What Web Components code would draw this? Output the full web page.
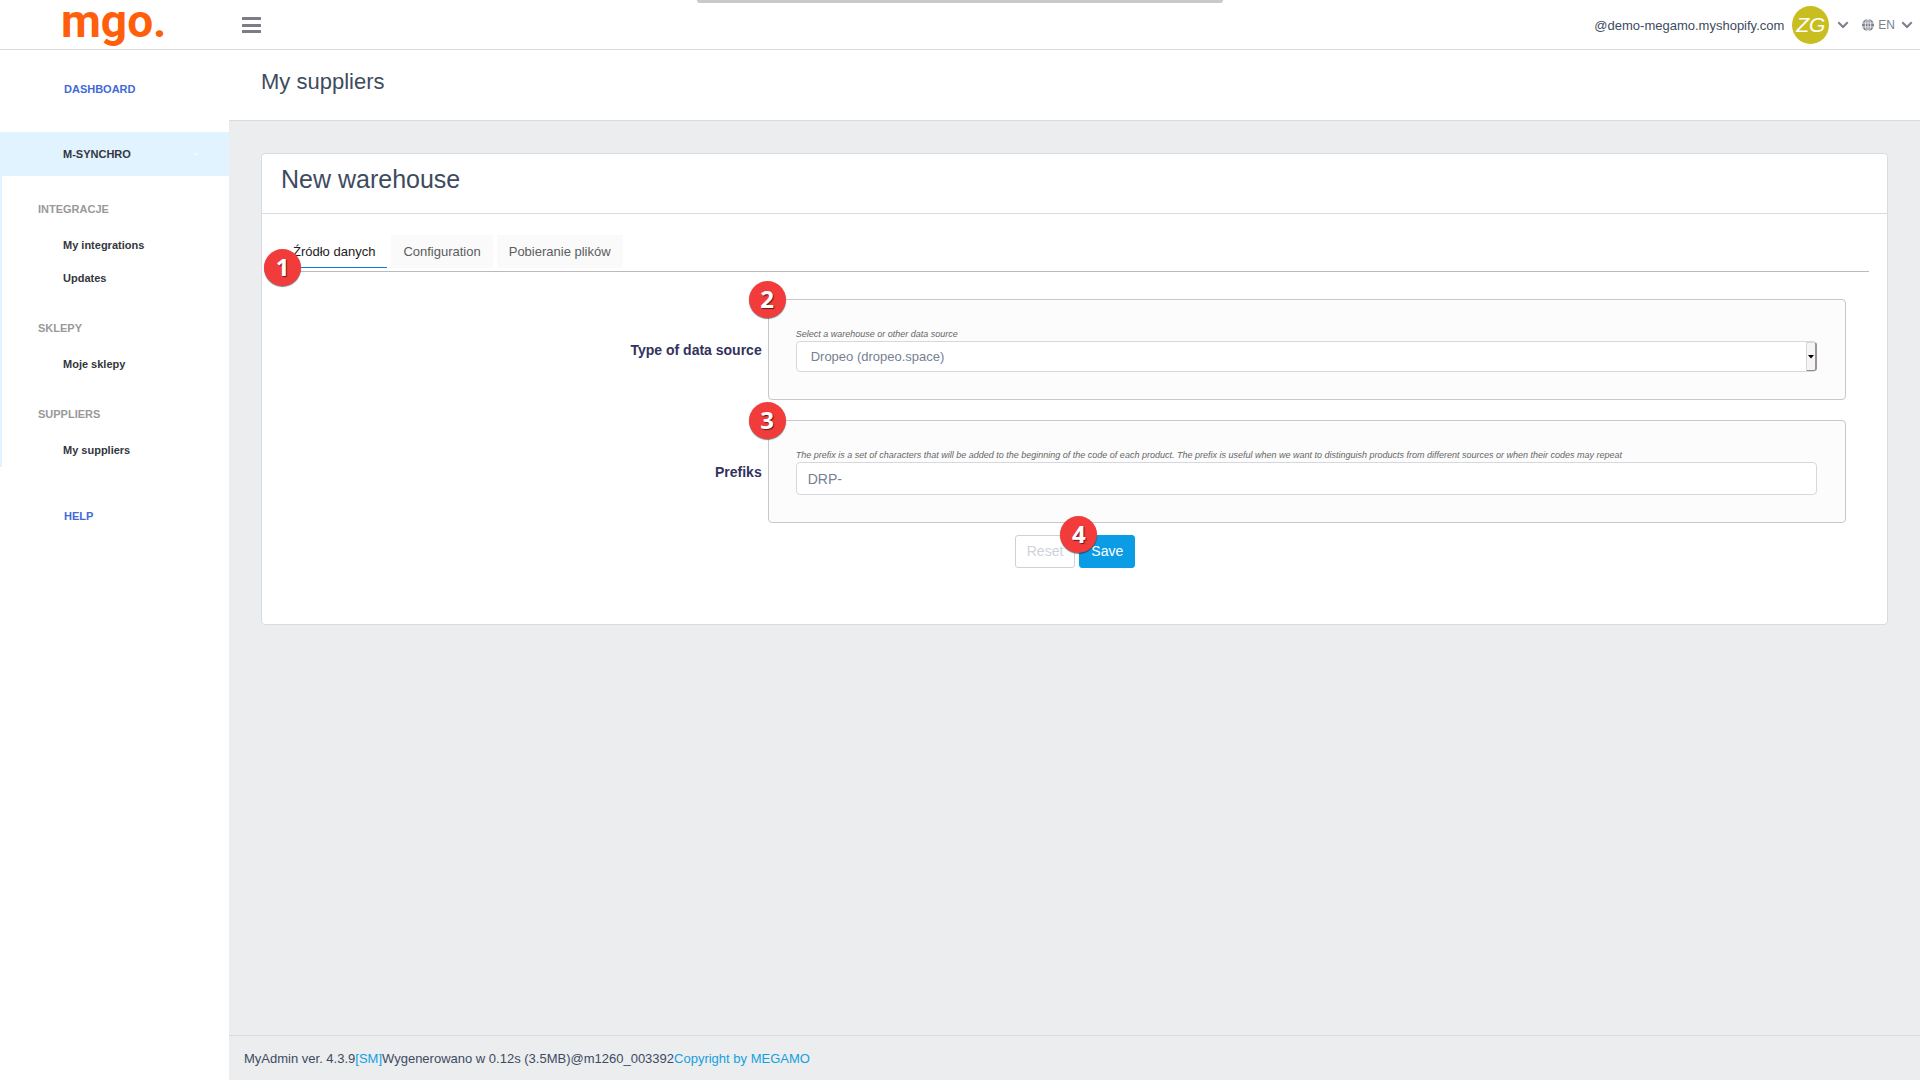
<!DOCTYPE html>
<html lang="en">
<head>
<meta charset="utf-8">
<meta name="viewport" content="width=device-width, initial-scale=1">
<title>My suppliers</title>
<style>
  html, body { margin: 0; height: 100%; }
  body { font-family: "Liberation Sans", Arial, sans-serif; font-size: 13px; color: #3e4b5f; background: #ebedef; }
</style>
</head>
<body>
<my-app>
  <app-header slot="header"></app-header>
  <app-sidebar slot="sidebar">
    <nav-link kind="top">DASHBOARD</nav-link>
    <nav-link kind="active">M-SYNCHRO</nav-link>
    <nav-tree>
      <nav-group heading="INTEGRACJE">
        <nav-link>My integrations</nav-link>
        <nav-link>Updates</nav-link>
      </nav-group>
      <nav-group heading="SKLEPY"><nav-link>Moje sklepy</nav-link></nav-group>
      <nav-group heading="SUPPLIERS"><nav-link>My suppliers</nav-link></nav-group>
    </nav-tree>
    <nav-link kind="top">HELP</nav-link>
  </app-sidebar>
  <page-title>My suppliers</page-title>
  <panel-card heading="New warehouse">
    <tab-bar>
      <tab-item selected>Źródło danych<step-badge slot="badge">1</step-badge></tab-item>
      <tab-item>Configuration</tab-item>
      <tab-item>Pobieranie plików</tab-item>
    </tab-bar>
    <form-field type="select" label="Type of data source" value="Dropeo (dropeo.space)" help="Select a warehouse or other data source"><step-badge>2</step-badge></form-field>
    <form-field type="text" label="Prefiks" value="DRP-" help="The prefix is a set of characters that will be added to the beginning of the code of each product. The prefix is useful when we want to distinguish products from different sources or when their codes may repeat"><step-badge>3</step-badge></form-field>
    <form-actions>
      <action-button kind="plain">Reset</action-button>
      <action-button kind="primary">Save<step-badge slot="badge">4</step-badge></action-button>
    </form-actions>
  </panel-card>
  <app-footer slot="footer"></app-footer>
</my-app>
<script>
  const define = (name, markup, setup) => {
    const template = document.createElement('template');
    template.innerHTML = '<style>*{box-sizing:border-box}</style>' + markup;
    customElements.define(name, class extends HTMLElement {
      constructor() {
        super();
        this.attachShadow({ mode: 'open' }).append(template.content.cloneNode(true));
      }
      connectedCallback() { if (setup) setup(this, this.shadowRoot); }
    });
  };

  define('my-app', `
    <style>
      :host { display: flex; flex-direction: column; min-height: 100vh; }
      .columns { display: flex; flex: 1; }
      .content { display: flex; flex-direction: column; flex: 1; min-width: 0; }
      main { flex: 1; }
    </style>
    <slot name="header"></slot>
    <div class="columns">
      <slot name="sidebar"></slot>
      <div class="content"><main><slot></slot></main><slot name="footer"></slot></div>
    </div>`);

  define('chevron-icon', `
    <style>:host { display: block; } svg { display: block; }</style>
    <svg width="12" height="8" viewBox="0 0 12 8" fill="none" stroke="#7c7f8c" stroke-width="2"><path d="M1.3 1.3 6 6l4.700-4.700"/></svg>`);

  define('app-header', `
    <style>
      :host { display: block; position: relative; background: #fff; border-bottom: 1px solid #d8dbe0; }
      header { display: flex; align-items: center; height: 49px; padding: 1px 7px 0 0; }
      .brand { flex: 0 0 229px; padding-left: 61px; font: 700 46px/40px Roboto, sans-serif; height: 48px; color: #ff5f0a; text-decoration: none; }
      button { border: 0; background: none; padding: 0; font: inherit; color: inherit; display: flex; align-items: center; }
      .menu { margin-left: 13px; }
      .user { margin-left: auto; gap: 8px; }
      .avatar { width: 37px; height: 38px; border-radius: 50%; background: #c8be20; color: #fff; font: italic 21px/38px "Liberation Sans", sans-serif; text-align: center; }
      .lang { margin-left: 13px; gap: 4px; color: #7c7f8c; font-size: 12px; }
      .lang chevron-icon { margin-left: 2px; }
      .notch { position: absolute; top: 0; left: 50%; width: 526px; height: 3px; margin-left: -263px; background: #c9c9c9; border-radius: 0 0 6px 6px; }
      svg { display: block; }
    </style>
    <header>
      <a class="brand" href="#">mgo.</a>
      <button class="menu" aria-label="Toggle menu"><svg width="19" height="17" viewBox="0 0 19 17" fill="#7c7b88"><rect width="19" height="3" rx=".5"/><rect y="7" width="19" height="3" rx=".5"/><rect y="13" width="19" height="3" rx=".5"/></svg></button>
      <button class="user"><span>@demo-megamo.myshopify.com</span><span class="avatar">ZG</span><chevron-icon></chevron-icon></button>
      <button class="lang"><svg width="12" height="12" viewBox="0 0 12 12"><circle cx="6" cy="6" r="6" fill="#7c7f8c"/><g fill="none" stroke="#fff" stroke-width=".8"><ellipse cx="6" cy="6" rx="2.700" ry="6"/><path d="M0 4h12M0 8h12M6 0v12"/></g></svg><span>EN</span><chevron-icon></chevron-icon></button>
    </header>
    <div class="notch"></div>`);

  define('app-sidebar', `
    <style>
      :host { display: block; flex: 0 0 229px; background: #fff; }
      nav { display: flex; flex-direction: column; padding-top: 17px; }
    </style>
    <nav><slot></slot></nav>`);

  define('nav-link', `
    <style>
      :host { display: block; font-size: 11px; font-weight: 700; }
      a { display: flex; align-items: center; height: 33px; padding: 0 0 2px 61px; color: #33373d; text-decoration: none; }
      svg { display: none; }
      :host([kind]) a { height: 44px; padding: 0 0 0 63px; }
      :host([kind="top"]) { padding-bottom: 21px; }
      :host([kind="top"]) a { padding-left: 64px; color: #3f6ad8; }
      :host([kind="active"]) a { background: #e0f3ff; justify-content: space-between; padding-right: 30px; }
      :host([kind="active"]) svg { display: block; }
    </style>
    <a href="#"><span><slot></slot></span><svg width="6" height="4" viewBox="0 0 6 4" fill="none" stroke="#f3fafe" stroke-width="1.500"><path d="M.5.5 3 3 5.500.5"/></svg></a>`);

  define('nav-tree', `
    <style>:host { display: block; border-left: 2px solid #e0f3ff; margin-bottom: 27px; }</style>
    <slot></slot>`);

  define('nav-group', `
    <style>
      :host { display: block; }
      h2 { margin: 0; padding: 25px 0 12px 36px; font-size: 11px; line-height: 16px; color: #999; }
    </style>
    <h2></h2><slot></slot>`,
    (host, root) => { root.querySelector('h2').textContent = host.getAttribute('heading'); });

  define('page-title', `
    <style>
      :host { display: block; background: #fff; border-bottom: 1px solid #d8dbe0; }
      h1 { margin: 0; padding: 19px 32px 25px; font-size: 22px; font-weight: 400; line-height: 26px; }
    </style>
    <h1><slot></slot></h1>`);

  define('panel-card', `
    <style>
      :host { display: block; margin: 32px; background: #fff; border: 1px solid #d8dbe0; border-radius: 4px; }
      h2 { margin: 0; padding: 10px 19px 19px; font-size: 25px; font-weight: 400; line-height: 30px; border-bottom: 1px solid #d8dbe0; }
      section { display: flex; flex-direction: column; padding: 21px 18px 56px 19px; }
    </style>
    <h2></h2><section><slot></slot></section>`,
    (host, root) => { root.querySelector('h2').textContent = host.getAttribute('heading'); });

  define('tab-bar', `
    <style>
      :host { display: flex; gap: 4px; padding-bottom: 3px; margin-bottom: 27px; border-bottom: 1px solid #bbb; }
    </style>
    <slot></slot>`);

  define('tab-item', `
    <style>
      :host { display: block; position: relative; }
      button { height: 33px; padding: 0 12px; border: 0; border-bottom: 1px solid #fafafa; background: #fafafa; font: inherit; color: #5b5d60; }
      :host([selected]) button { background: #fff; border-bottom-color: #0c78e0; color: #222; }
      ::slotted(step-badge) { position: absolute; left: -17px; bottom: -18px; }
    </style>
    <button role="tab"><slot></slot></button><slot name="badge"></slot>`);

  define('step-badge', `
    <style>
      :host { display: block; width: 37px; height: 37px; border-radius: 50%; background: #f23c3c; box-shadow: 0 1px 1px rgba(0,0,0,.5); color: #fff; font: 700 24px/36px "Open Sans", sans-serif; text-align: center; text-shadow: 1px 1px 1px rgba(0,0,0,.6); }
    </style>
    <slot></slot>`);

  define('form-field', `
    <style>
      :host { display: grid; grid-template-columns: 43fr 100fr; align-items: center; padding: 0 23px; margin-bottom: 20px; }
      label { padding-right: 6px; text-align: right; font-size: 14px; font-weight: 700; color: #32325d; }
      .box { position: relative; min-width: 0; padding: 28px 28px 27px 27px; border: 1px solid #c8c8c8; border-radius: 4px; background: #fcfcfc; }
      .help { display: block; font-size: 9px; line-height: 13px; font-style: italic; color: #666; }
      .control { position: relative; }
      input, select { display: block; width: 100%; border: 1px solid #d5d8df; border-radius: 4px; background: #fff; color: #768192; font-family: inherit; appearance: none; }
      input { height: 33px; padding: 0 11px; font-size: 14px; }
      select { height: 31px; padding: 0 14px; font-size: 13px; }
      .arrow { position: absolute; top: 1px; right: 0; width: 11px; height: 29px; display: flex; align-items: center; justify-content: center; background: #f6f5f3; border: solid; border-width: 1px 2px 1px 1px; border-color: #d8d8dc #97969c #8f8e94 #d8d8dc; border-radius: 0 3px 3px 0; pointer-events: none; }
      ::slotted(step-badge) { position: absolute; left: -20px; top: -19px; }
    </style>
    <label for="control"></label>
    <div class="box"><small class="help" id="help"></small><div class="control"></div><slot></slot></div>`,
    (host, root) => {
      const isSelect = host.getAttribute('type') === 'select';
      const value = host.getAttribute('value');
      const control = document.createElement(isSelect ? 'select' : 'input');
      control.id = 'control';
      control.setAttribute('aria-describedby', 'help');
      const wrap = root.querySelector('.control');
      wrap.append(control);
      if (isSelect) {
        control.add(new Option(value));
        wrap.insertAdjacentHTML('beforeend', '<span class="arrow"><svg width="6" height="4" viewBox="0 0 6 4"><path d="M0 0h6L3 3.500z"/></svg></span>');
      } else {
        control.value = value;
      }
      root.querySelector('label').textContent = host.getAttribute('label');
      root.querySelector('.help').textContent = host.getAttribute('help');
    });

  define('form-actions', `
    <style>:host { display: flex; justify-content: center; gap: 4px; margin-top: -8px; }</style>
    <slot></slot>`);

  define('action-button', `
    <style>
      :host { display: block; position: relative; }
      button { height: 33px; padding: 0 11px 2px; border: 1px solid #ced2d8; border-radius: 3px; background: #fff; color: #ced2d8; font: inherit; font-size: 14px; }
      :host([kind="primary"]) button { background: #0a9de5; border-color: #0a9de5; color: #fff; }
      ::slotted(step-badge) { position: absolute; left: -19px; top: -19px; }
    </style>
    <button><slot></slot></button><slot name="badge"></slot>`);

  define('app-footer', `
    <style>
      :host { display: block; border-top: 1px solid #d8dbe0; }
      footer { display: flex; align-items: center; height: 44px; padding: 0 15px; }
      a { color: #14a0df; text-decoration: none; }
    </style>
    <footer><span>MyAdmin ver. 4.3.9</span><a href="#">[SM]</a><span>Wygenerowano w 0.12s (3.5MB)</span><span>@m1260_003392</span><a href="#">Copyright by MEGAMO</a></footer>`);
</script>
</body>
</html>
